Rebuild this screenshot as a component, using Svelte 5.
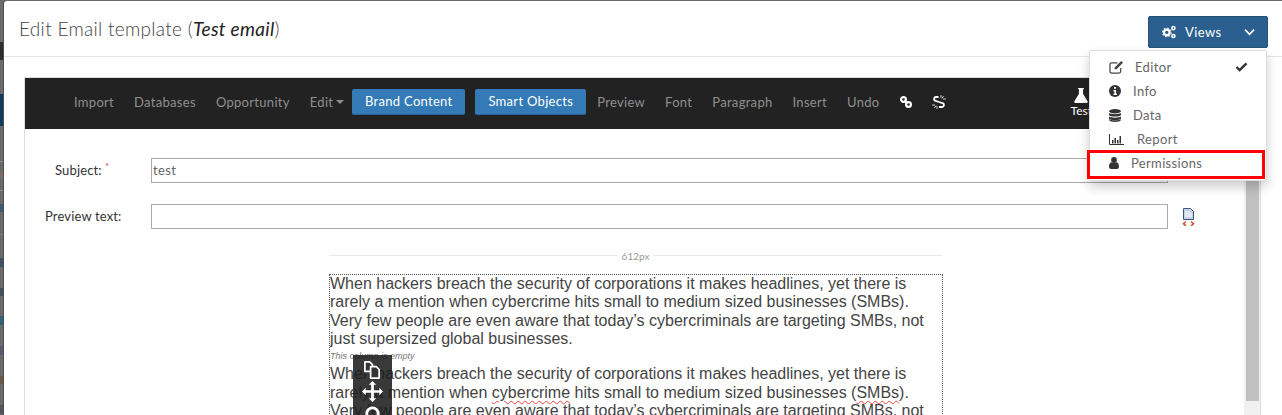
<script>
  const nav1 = ['Import', 'Databases', 'Opportunity'];
  const nav2 = ['Preview', 'Font', 'Paragraph', 'Insert', 'Undo'];
  const para = "When hackers breach the security of corporations it makes headlines, yet there is rarely a mention when cybercrime hits small to medium sized businesses (SMBs). Very few people are even aware that today’s cybercriminals are targeting SMBs, not just supersized global businesses.";
  const frags = [
    { top: 42, h: 18, c: '#2e2e2e' },
    { top: 94, h: 32, c: '#123b5b' },
    { top: 161, h: 1, c: '#8a8a8a' },
    { top: 172, h: 6, c: '#7d6a60' },
    { top: 190, h: 1, c: '#8a8a8a' },
    { top: 204, h: 8, c: '#3c5a78' },
    { top: 234, h: 1, c: '#7a7a7a' },
    { top: 258, h: 9, c: '#3d5068' },
    { top: 288, h: 8, c: '#45505c' },
    { top: 316, h: 9, c: '#2f6280' },
    { top: 346, h: 9, c: '#5a5a70' },
    { top: 376, h: 8, c: '#6a5a48' },
    { top: 405, h: 9, c: '#4e5560' }
  ];
</script>

<div class="page">
  <div class="backdrop">
    {#each frags as f}<i class="frag" style="top:{f.top}px;height:{f.h}px;background:{f.c}"></i>{/each}
  </div>
  <div class="modal">
    <header class="head">
      <h1>Edit Email template (<em>Test email</em>)</h1>
      <div class="views">
        <svg class="gears" viewBox="0 0 18 16" width="16" height="14"><g fill="none" stroke="#fff"><circle cx="6.5" cy="8.5" r="3.2" stroke-width="2.6"/><circle cx="14" cy="3.6" r="1.8" stroke-width="1.7"/><circle cx="14" cy="12.6" r="1.8" stroke-width="1.7"/><circle cx="6.5" cy="8.5" r="5" stroke-width="1.2" stroke-dasharray="1.8 2.1"/></g></svg>
        <span class="vlabel">Views</span>
        <svg class="chev" viewBox="0 0 12 8" width="11" height="8"><path d="M1 1.5l5 5 5-5" fill="none" stroke="#fff" stroke-width="1.8"/></svg>
      </div>
    </header>

    <div class="body">
      <section class="card">
        <nav class="bar">
          {#each nav1 as n}<span class="item">{n}</span>{/each}
          <span class="item edit">Edit<b class="caret"></b></span>
          <span class="btn brand">Brand Content</span>
          <span class="btn smart">Smart Objects</span>
          {#each nav2 as n}<span class="item">{n}</span>{/each}
          <svg class="chain" viewBox="0 0 14 14" width="14" height="14"><g fill="none" stroke="#fff" stroke-width="2.2"><circle cx="4.5" cy="4.5" r="2.4"/><circle cx="9.500" cy="9.500" r="2.400"/><path d="M5.500 5.500l3 3"/></g></svg>
          <svg class="broken" viewBox="0 0 14 14" width="14" height="14"><g fill="none" stroke="#fff" stroke-width="1.8"><path d="M6.500 2H4a2 2 0 0 0-1 3.700L7 7"/><path d="M7 7l4 1.300A2 2 0 0 1 10 12H7"/></g><path d="M9 0v3M11.500 1L10 3.500M14 4h-3M0 10h3M2.500 13L4 10.500M5 14v-3" stroke="#ddd" stroke-width=".9"/></svg>
          <span class="test">
            <svg viewBox="0 0 14 14" width="16" height="17"><path d="M4.500 .5h5v1H8.800v4L13 12.500a1 1 0 0 1-1 1H2a1 1 0 0 1-1-1L5.200 5.500v-4h-.7z" fill="#fff"/></svg>
            <span>Test</span>
          </span>
        </nav>

        <div class="form">
          <div class="row subject">
            <label for="subj">Subject: <sup>*</sup></label>
            <input id="subj" value="test" />
          </div>
          <div class="row preview">
            <label for="prev">Preview text:</label>
            <input id="prev" />
            <svg class="docicon" viewBox="0 0 13 18" width="13" height="18">
              <path d="M1.500.5h7l3 3v8h-10z" fill="#c8d2e6" stroke="#3f5578"/>
              <path d="M3 4h5M3 6h7M3 8h7" stroke="#fff"/>
              <path d="M4 13.500l-2.500 2.200L4 18M9 13.500l2.500 2.200L9 18" fill="none" stroke="#d2552a" stroke-width="1.600"/>
            </svg>
          </div>
        </div>

        <div class="ruler"><span>612px</span></div>

        <div class="email">
          <p>{para}</p>
          <div class="empty">This column is empty</div>
          <p>When hackers breach the security of corporations it makes headlines, yet there is rarely a mention when <u>cybercrime</u> hits small to medium sized businesses (<u>SMBs</u>). Very few people are even aware that today’s cybercriminals are targeting SMBs, not just supersized global businesses.</p>
          <div class="floater">
            <svg viewBox="0 0 20 20" width="19" height="19"><g fill="#333" stroke="#fff" stroke-width="1.800" stroke-linejoin="round"><path d="M2 2h5l3 3v7H2z" /><path d="M8 7h6l3 3v9H8z"/></g></svg>
            <svg viewBox="0 0 20 20" width="21" height="21"><path d="M10 0l3.500 3.500H11.300V8.700h5.200V6.500L20 10l-3.500 3.500v-2.200h-5.200v5.200h2.200L10 20l-3.500-3.500h2.200v-5.200H3.500v2.200L0 10l3.500-3.500v2.200h5.200V3.500H6.500z" fill="#fff"/></svg>
            <svg viewBox="0 0 20 20" width="19" height="19"><circle cx="10" cy="10" r="6" fill="none" stroke="#fff" stroke-width="3"/></svg>
          </div>
        </div>
      </section>
      <div class="scroll"><i></i></div>
    </div>

    <ul class="menu">
      <li class="m-editor">
        <svg viewBox="0 0 16 15" width="15" height="14"><path d="M12.500 8.500V12a2 2 0 0 1-2 2H3a2 2 0 0 1-2-2V5a2 2 0 0 1 2-2h6" fill="none" stroke="#444" stroke-width="1.300"/><path d="M6 8l7-7 2 2-7 7H6z" fill="#444"/></svg>
        <span>Editor</span>
        <svg class="check" viewBox="0 0 14 11" width="13" height="10"><path d="M1.500 5.500L5 9l7.500-7.500" fill="none" stroke="#333" stroke-width="2.600"/></svg>
      </li>
      <li class="m-info">
        <svg viewBox="0 0 12 12" width="12" height="12"><circle cx="6" cy="6" r="6" fill="#333"/><path d="M5 2h2v1.700H5zM4.500 5h2.500v3.500H8V10H4.500V8.500h1V6.500h-1z" fill="#fff"/></svg>
        <span>Info</span>
      </li>
      <li class="m-data">
        <svg viewBox="0 0 12 13" width="12" height="13"><g fill="#333"><ellipse cx="6" cy="2.200" rx="6" ry="2.200"/><path d="M0 4c1 1.500 11 1.500 12 0v2c-1 2-11 2-12 0zM0 7.500c1 1.500 11 1.500 12 0v2c-1 2-11 2-12 0zM0 10.200c1 1.500 11 1.500 12 0v.8c-1 2.600-11 2.600-12 0z"/></g></svg>
        <span>Data</span>
      </li>
      <li class="m-report">
        <svg viewBox="0 0 15 11" width="15" height="11"><path d="M.5 0v10.500H15" fill="none" stroke="#333"/><path d="M3 6h1.500v3.500H3zM5.500 4H7v5.500H5.500zM8 6h1.500v3.500H8zM10.500 2H12v7.500h-1.500z" fill="#333"/></svg>
        <span>Report</span>
      </li>
      <li class="m-perm">
        <svg viewBox="0 0 10 12" width="10" height="12"><circle cx="5" cy="3" r="2.900" fill="#333"/><path d="M0 10c0-3 1-4.500 2.500-4.700C3.500 6 6.500 6 7.500 5.300 9 5.500 10 7 10 10c0 1-1 2-2 2H2c-1 0-2-1-2-2z" fill="#333"/></svg>
        <span>Permissions</span>
      </li>
    </ul>
    <div class="hl"></div>
  </div>
</div>

<style>
  :global(body) { margin: 0; }
  .page { position: relative; width: 1282px; height: 415px; overflow: hidden; background: #6b6b6b; font-family: Lato, "Open Sans", sans-serif; }
  .backdrop { position: absolute; inset: 0; }
  .frag { position: absolute; left: 0; width: 4px; }
  .modal { position: absolute; left: 4px; top: 1px; width: 1278px; height: 414px; background: #fff; border-top-left-radius: 3px; box-shadow: -1px 0 0 #4f4f4f; }
  .head { height: 55px; border-bottom: 1px solid #e5e5e5; box-sizing: content-box; display: flex; align-items: flex-start; justify-content: space-between; padding: 0 14px 0 15px; }
  h1 { margin: 17px 0 0; font-size: 19px; line-height: 22px; font-weight: 300; color: #444; letter-spacing: .3px; }
  h1 em { font-weight: 400; color: #222; }
  .views { margin-top: 15px; width: 120px; height: 32px; box-sizing: border-box; background: #2b5f8f; border: 1px solid #24507a; border-radius: 2px; color: #fff; display: flex; align-items: center; padding-left: 12px; font-size: 13px; }
  .vlabel { margin-left: 8px; letter-spacing: .4px; }
  .chev { margin-left: auto; margin-right: 12px; }
  .body { display: flex; padding: 20px 20px 0 20px; height: 338px; }
  .card { position: relative; width: 1222px; border-left: 1px solid #ddd; border-top: 1px solid #ddd; flex: none; }
  .bar { height: 51px; background: #222; display: flex; align-items: center; padding-left: 49px; font-size: 13px; color: #8f8f8f; }
  .item { margin-right: 20px; letter-spacing: .3px; margin-top: -3px; }
  .edit { margin-right: 8px; display: inline-flex; align-items: center; }
  .caret { width: 0; height: 0; margin-left: 3px; border: 4px solid transparent; border-top-color: #8f8f8f; border-bottom: 0; }
  .btn { height: 26px; margin-top: -4px; background: #337ab7; border-bottom: 1px solid #2a6496; border-radius: 2px; color: #fff; display: flex; align-items: center; justify-content: center; box-sizing: border-box; letter-spacing: .3px; }
  .brand { width: 113px; margin-right: 10px; }
  .smart { width: 111px; margin-right: 11px; }
  .chain { margin-left: -1px; margin-right: 19px; margin-top: -3px; }
  .broken { margin-top: -3px; }
  .test { margin-left: auto; margin-right: 155px; display: flex; flex-direction: column; align-items: center; font-size: 12px; line-height: 13px; color: #fff; margin-top: -4px; }
  .form { padding-top: 28px; }
  .row { display: flex; align-items: center; height: 26px; }
  .row label { font-size: 13px; color: #333; width: 126px; box-sizing: border-box; letter-spacing: .15px; }
  .row input { width: 1017px; height: 25px; box-sizing: border-box; border: 1px solid #aaa; padding: 0 1px; font: 13px Lato, sans-serif; color: #666; letter-spacing: .4px; outline: none; }
  .subject label { padding-left: 30px; }
  .subject sup { color: #e33; font-size: 9px; line-height: 0; }
  .preview { margin-top: 20px; }
  .preview label { padding-left: 20px; }
  .docicon { margin-left: 14px; margin-top: 2px; }
  .ruler { margin: 17px 0 0 304px; width: 613px; height: 20px; margin-bottom: 8px; position: relative; display: flex; align-items: center; justify-content: center; font-size: 10px; color: #999; }
  .ruler::before { content: ""; position: absolute; left: 0; right: 0; top: 9px; height: 1px; background: #e9e9e9; }
  .ruler span { position: relative; background: #fff; padding: 0 4px; }
  .email { position: relative; margin: 0 0 0 304px; width: 614px; box-sizing: border-box; border: 1px dotted #555; border-bottom: 0; font: 16px/18.35px "Liberation Sans", Arial, sans-serif; color: #444; height: 146px; overflow: hidden; }
  .email p { margin: 0; }
  .empty { font-size: 9px; font-style: italic; color: #777; line-height: 12px; margin: 2px 0 3px; }
  u { text-decoration: underline wavy #e44 1px; text-underline-offset: 2px; }
  .floater { position: absolute; left: 23px; top: 80px; width: 39px; height: 62px; background: rgba(30,30,30,.88); display: flex; flex-direction: column; align-items: center; padding-top: 5px; gap: 2px; overflow: hidden; box-sizing: border-box; }
  .floater svg { flex: none; }
  .scroll { width: 16px; margin-left: -3px; height: 338px; background: #f1f1f1; border-right: 1px solid #ddd; flex: none; position: relative; }
  .scroll i { position: absolute; left: 2px; right: 1px; top: 0; height: 324px; background: #c1c1c1; display: block; }
  .menu { position: absolute; left: 1085px; top: 49px; width: 178px; height: 131px; margin: 0; padding: 4px 0 0; box-sizing: border-box; list-style: none; background: #fff; border: 1px solid #ddd; border-radius: 2px; box-shadow: 0 6px 12px rgba(0,0,0,.2); z-index: 3; }
  .menu li { height: 24px; display: flex; align-items: center; font-size: 13px; color: #666; position: relative; letter-spacing: .35px; padding-left: 19px; }
  .m-editor span { margin-left: 11px; }
  .check { position: absolute; right: 18px; }
  .m-info span { margin-left: 12px; }
  .m-data span { margin-left: 12px; }
  .m-report span { margin-left: 13px; }
  .m-perm span { margin-left: 12px; }
  .hl { position: absolute; left: 1083px; top: 149px; width: 178px; height: 29px; box-sizing: border-box; border: 3px solid #f00; z-index: 4; }
</style>
